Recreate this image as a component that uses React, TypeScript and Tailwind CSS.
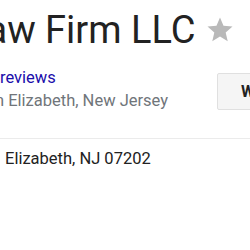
export default function App() {
  return (
    <div className="w-[250px] h-[250px] overflow-hidden bg-white font-['Roboto',sans-serif]">
      <div className="flex items-center pt-[8px] -ml-[34px] whitespace-nowrap">
        <span className="text-[38px] leading-[44px] text-[#222]">Law Firm LLC</span>
        <svg viewBox="0 0 24 24" className="w-[30px] h-[30px] ml-[10px] fill-[#b9b9b9] shrink-0">
          <path d="M12 17.27L18.18 21l-1.64-7.03L22 9.24l-7.19-.61L12 2 9.19 8.63 2 9.24l5.46 4.73L5.82 21z" />
        </svg>
      </div>
      <div className="flex items-center justify-between mt-[15px]">
        <div className="flex flex-col whitespace-nowrap">
          <span className="text-[16.5px] leading-[22px] text-[#1a0dab]">reviews</span>
          <span className="text-[16.5px] leading-[24px] text-[#70757a] -ml-[9px]">in Elizabeth, New Jersey</span>
        </div>
        <button className="shrink-0 w-[60px] -mr-[27px] h-[37px] mt-[3px] border border-[#e0e0e0] bg-[#f5f5f5] rounded-[2px] text-left pl-[23px] text-[16px] font-bold text-[#222]">Website</button>
      </div>
      <div className="border-t border-[#ebebeb] mt-[25px]" />
      <div className="pl-[5px] pt-[9px] text-[16.5px] leading-[22px] text-[#222]">Elizabeth, NJ 07202</div>
    </div>
  );
}
